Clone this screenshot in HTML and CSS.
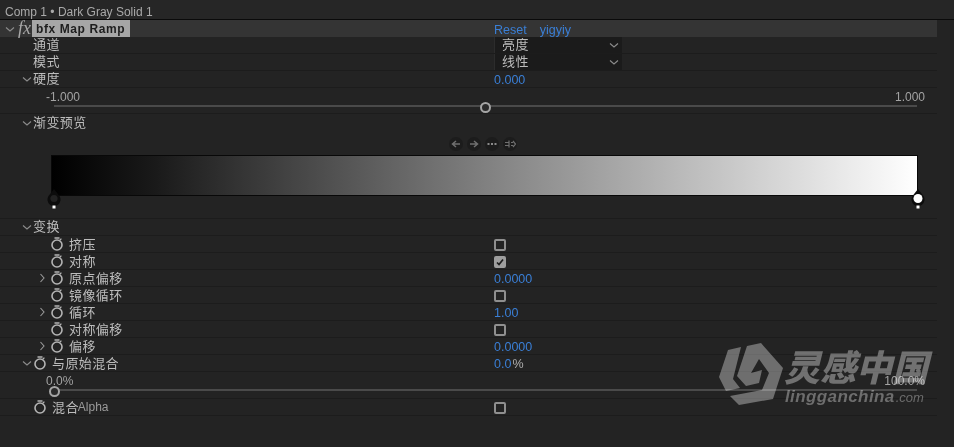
FILE: index.html
```html
<!DOCTYPE html>
<html lang="zh">
<head>
<meta charset="utf-8">
<title>Effect Controls</title>
<link rel="stylesheet" href="styles.css">
</head>
<body>
<svg class="defs" width="0" height="0" aria-hidden="true">
  <symbol id="sw" viewBox="0 0 14 14"><circle cx="7" cy="8" r="5" fill="none" stroke="#b4b4b4" stroke-width="1.6"/><path d="M4.5 1h5M9.8 3.2 11.4 1.6" fill="none" stroke="#b4b4b4" stroke-width="1.3"/></symbol>
  <symbol id="open" viewBox="0 0 10 10"><path d="M1 3.5 5 7l4-3.5" fill="none" stroke="#8c8c8c" stroke-width="1.1"/></symbol>
  <symbol id="closed" viewBox="0 0 10 10"><path d="M3.5 1 7 5l-3.5 4" fill="none" stroke="#9a9a9a" stroke-width="1.1"/></symbol>
</svg>
<div class="panel">
  <div class="title">Comp 1 • Dark Gray Solid 1</div>
  <div class="rows">
    <div class="row head">
      <div class="label l0"><span class="twist"><svg class="ic10"><use href="#open"/></svg></span><i class="fx">fx</i><b class="fxname">bfx Map Ramp</b></div>
      <div class="value"><span class="link">Reset</span><span class="link about">yigyiy</span></div>
    </div>
    <div class="row">
      <div class="label l1"><span class="twist"></span><span class="cn">通道</span></div>
      <div class="value"><div class="select"><span class="cn">亮度</span><svg class="ic10"><use href="#open"/></svg></div></div>
    </div>
    <div class="row">
      <div class="label l1"><span class="twist"></span><span class="cn">模式</span></div>
      <div class="value"><div class="select"><span class="cn">线性</span><svg class="ic10"><use href="#open"/></svg></div></div>
    </div>
    <div class="row">
      <div class="label l1"><span class="twist"><svg class="ic10"><use href="#open"/></svg></span><span class="cn">硬度</span></div>
      <div class="value"><span class="link">0.000</span></div>
    </div>
    <div class="slider hard">
      <div class="ends"><span>-1.000</span><span>1.000</span></div>
      <div class="track"><span class="knob mid"></span></div>
    </div>
    <div class="preview">
      <div class="label l1 phead"><span class="twist"><svg class="ic10"><use href="#open"/></svg></span><span class="cn">渐变预览</span></div>
      <div class="tools">
        <span class="tool"><svg viewBox="0 0 14 14"><path d="M11 7H4M7 4 3.5 7 7 10" fill="none" stroke="#6f6f6f" stroke-width="1.5"/></svg></span>
        <span class="tool"><svg viewBox="0 0 14 14"><path d="M3 7h7M7 4l3.5 3L7 10" fill="none" stroke="#6f6f6f" stroke-width="1.5"/></svg></span>
        <span class="tool"><svg viewBox="0 0 14 14"><path d="M2.500 7h2M6 7h2M9.500 7h2" fill="none" stroke="#8a8a8a" stroke-width="2"/></svg></span>
        <span class="tool"><svg viewBox="0 0 14 14"><path d="M2 5.500h4M2 8.500h4M8 5.500h2M8 8.500h2M6 3.500v7M10 4 12.500 7 10 10" fill="none" stroke="#6f6f6f" stroke-width="1.200"/></svg></span>
      </div>
      <div class="ramp">
        <span class="stop s-black"><svg viewBox="0 0 14 20"><path d="M7 0 12.500 7A6.500 6.500 0 1 1 1.500 7Z" fill="#0c0c0c"/><circle cx="7" cy="9.500" r="3.600" fill="#222"/><rect x="5.500" y="16.500" width="3" height="3" fill="#fff"/></svg></span>
        <span class="stop s-white"><svg viewBox="0 0 14 20"><path d="M7 0 12.500 7A6.500 6.500 0 1 1 1.500 7Z" fill="#0c0c0c"/><circle cx="7" cy="9.500" r="4.500" fill="#fff"/><rect x="5.500" y="16.500" width="3" height="3" fill="#fff"/></svg></span>
      </div>
    </div>
    <div class="row">
      <div class="label l1"><span class="twist"><svg class="ic10"><use href="#open"/></svg></span><span class="cn">变换</span></div>
    </div>
    <div class="row">
      <div class="label l2"><span class="twist"></span><svg class="sw"><use href="#sw"/></svg><span class="cn">挤压</span></div>
      <div class="value"><span class="check"></span></div>
    </div>
    <div class="row">
      <div class="label l2"><span class="twist"></span><svg class="sw"><use href="#sw"/></svg><span class="cn">对称</span></div>
      <div class="value"><span class="check on"><svg viewBox="0 0 12 12"><path d="M3 6.500 5 8.500 9 3.500" fill="none" stroke="#1c1c1c" stroke-width="1.700"/></svg></span></div>
    </div>
    <div class="row">
      <div class="label l2"><span class="twist"><svg class="ic10"><use href="#closed"/></svg></span><svg class="sw"><use href="#sw"/></svg><span class="cn">原点偏移</span></div>
      <div class="value"><span class="link">0.0000</span></div>
    </div>
    <div class="row">
      <div class="label l2"><span class="twist"></span><svg class="sw"><use href="#sw"/></svg><span class="cn">镜像循环</span></div>
      <div class="value"><span class="check"></span></div>
    </div>
    <div class="row">
      <div class="label l2"><span class="twist"><svg class="ic10"><use href="#closed"/></svg></span><svg class="sw"><use href="#sw"/></svg><span class="cn">循环</span></div>
      <div class="value"><span class="link">1.00</span></div>
    </div>
    <div class="row">
      <div class="label l2"><span class="twist"></span><svg class="sw"><use href="#sw"/></svg><span class="cn">对称偏移</span></div>
      <div class="value"><span class="check"></span></div>
    </div>
    <div class="row">
      <div class="label l2"><span class="twist"><svg class="ic10"><use href="#closed"/></svg></span><svg class="sw"><use href="#sw"/></svg><span class="cn">偏移</span></div>
      <div class="value"><span class="link">0.0000</span></div>
    </div>
    <div class="row">
      <div class="label l1"><span class="twist"><svg class="ic10"><use href="#open"/></svg></span><svg class="sw"><use href="#sw"/></svg><span class="cn">与原始混合</span></div>
      <div class="value"><span class="link">0.0</span><span class="unit">%</span></div>
    </div>
    <div class="slider mix">
      <div class="ends"><span>0.0%</span><span>100.0%</span></div>
      <div class="track"><span class="knob start"></span></div>
    </div>
    <div class="row">
      <div class="label l1"><span class="twist"></span><svg class="sw"><use href="#sw"/></svg><span class="cn">混合</span><span class="alpha">Alpha</span></div>
      <div class="value"><span class="check"></span></div>
    </div>
  </div>
  <div class="mark">
    <svg class="mark-logo" viewBox="0 0 66 63"><path d="M10 7 23 4 15 36 22 45 8 48 1 34Z" fill="#575757"/><path d="M29 3 43 0 65 25 55 56 21 62 12 53 44 47 51 30 41 16 33 30 44 27 41 40 28 43 19 33Z" fill="#575757"/></svg>
    <div class="mark-text">
      <div class="mark-cn">灵感中国</div>
      <div class="mark-en">lingganchina<small>.com</small></div>
    </div>
  </div>
</div>
</body>
</html>
```
FILE: styles.css
```css
* { box-sizing: border-box; }
html, body { margin: 0; height: 100%; }
body {
  background: #232323;
  color: #b9b9b9;
  font-family: "Liberation Sans", "Noto Sans CJK SC", sans-serif;
  font-size: 12px;
  overflow: hidden;
}
.defs { position: absolute; }
.panel { position: relative; width: 954px; height: 447px; background: #232323; isolation: isolate; }
.title {
  height: 20px;
  padding: 5px 0 0 5px;
  line-height: 14px;
  color: #a9a9a9;
  border-bottom: 1px solid #0a0a0a;
  background: #262626;
}
.rows { width: 937px; }
.row {
  display: flex;
  height: 17px;
  align-items: center;
  border-bottom: 1px solid #1c1c1c;
}
.row.head { background: #343434; border-bottom: 0; }
.label {
  width: 494px;
  flex: none;
  display: flex;
  align-items: center;
  height: 100%;
}
.l0 { padding-left: 5px; }
.l1 { padding-left: 22px; }
.l2 { padding-left: 37px; }
.twist { width: 11px; flex: none; display: flex; align-items: center; }
.ic10 { width: 10px; height: 10px; display: block; flex: none; }
.sw { width: 14px; height: 14px; flex: none; margin-right: 5px; }
.l2 .twist { width: 13px; }
.cn {
  font-family: "Noto Sans CJK SC", sans-serif;
  font-size: 13px;
  letter-spacing: 0.400px;
  line-height: 16px;
  padding-bottom: 2px;
  color: #bcbcbc;
}
.sw + .cn { padding-bottom: 0; }
.alpha { font-size: 12px; font-weight: 400; color: #9a9a9a; margin-left: -1px; }
.fx {
  font-family: "Liberation Serif", serif;
  font-size: 18px;
  line-height: 17px;
  color: #a8a8a8;
  margin-left: 2px;
  width: 14px;
}
.fxname {
  background: #a6a6a6;
  color: #1e1e1e;
  height: 17px;
  line-height: 18px;
  padding: 0 0 0 4px;
  font-size: 12px;
  letter-spacing: 0.600px;
  width: 98px;
  white-space: nowrap;
}
.value { display: flex; align-items: center; height: 100%; flex: 1; }
.link { color: #3a7fd6; font-size: 12.500px; line-height: 16px; padding-top: 2px; }
.about { margin-left: 13px; }
.unit { color: #aeaeae; font-size: 12.500px; margin-left: 1px; padding-top: 2px; }
.select {
  width: 128px;
  height: 16px;
  background: #1b1b1b;
  display: flex;
  align-items: center;
  justify-content: space-between;
  padding: 0 3px 0 7px;
  border-left: 1px solid #2c2c2c;
}
.check {
  width: 12px;
  height: 12px;
  border: 2px solid #8f8f8f;
  border-radius: 2px;
  display: block;
  position: relative;
  top: 1px;
}
.check.on { background: #9d9d9d; border-color: #9d9d9d; }
.check svg { display: block; width: 12px; height: 12px; margin: -2px; }
.slider { position: relative; border-bottom: 1px solid #1c1c1c; }
.slider.hard { height: 26px; }
.slider.mix { height: 27px; }
.ends {
  display: flex;
  justify-content: space-between;
  line-height: 14px;
  color: #a3a3a3;
  font-size: 12px;
  padding: 2px 12px 0 46px;
}
.track {
  position: relative;
  height: 2px;
  margin: 1px 20px 0 54px;
  background: #4a4a4a;
}
.slider.mix .ends { padding-top: 2px; }
.slider.mix .track { margin-top: 1px; }
.knob {
  position: absolute;
  top: -3px;
  width: 11px;
  height: 11px;
  border-radius: 50%;
  border: 2.500px solid #a5a5a5;
  background: #2a2a2a;
}
.knob.mid { left: 426px; }
.knob.start { left: -5px; }
.preview { height: 105px; border-bottom: 1px solid #1c1c1c; }
.phead { height: 17px; }
.tools {
  display: flex;
  gap: 4px;
  margin: 6px 0 0;
  padding-left: 449px;
}
.tool {
  width: 14px;
  height: 14px;
  border-radius: 50%;
  background: #1c1c1c;
  display: block;
}
.tool svg { display: block; width: 14px; height: 14px; }
.ramp {
  position: relative;
  height: 41px;
  margin: 4px 19px 0 51px;
  border: 1px solid #080808;
  background: linear-gradient(to right, #000 0%, #1a1a1a 12%, #808080 50%, #fff 100%);
}
.stop { position: absolute; top: 33px; width: 14px; height: 20px; }
.stop svg { display: block; width: 14px; height: 20px; }
.s-black { left: -5px; }
.s-white { right: -8px; }
.mark {
  position: absolute;
  left: 718px;
  top: 343px;
  display: flex;
  pointer-events: none;
  mix-blend-mode: screen;
}
.mark-logo { width: 66px; height: 63px; display: block; }
.mark-cn {
  font-family: "Noto Sans CJK SC", sans-serif;
  font-weight: 900;
  font-style: italic;
  font-size: 36px;
  line-height: 44px;
  color: #5a5a5a;
  white-space: nowrap;
}
.mark-en {
  font-family: "Liberation Sans", sans-serif;
  font-style: italic;
  font-weight: 700;
  font-size: 17px;
  line-height: 18px;
  letter-spacing: 0.400px;
  color: #565656;
  white-space: nowrap;
  margin-top: 1px;
  padding-left: 1px;
}
.mark-en small { font-size: 13px; font-weight: 400; margin-left: 1px; letter-spacing: 0; }
```
